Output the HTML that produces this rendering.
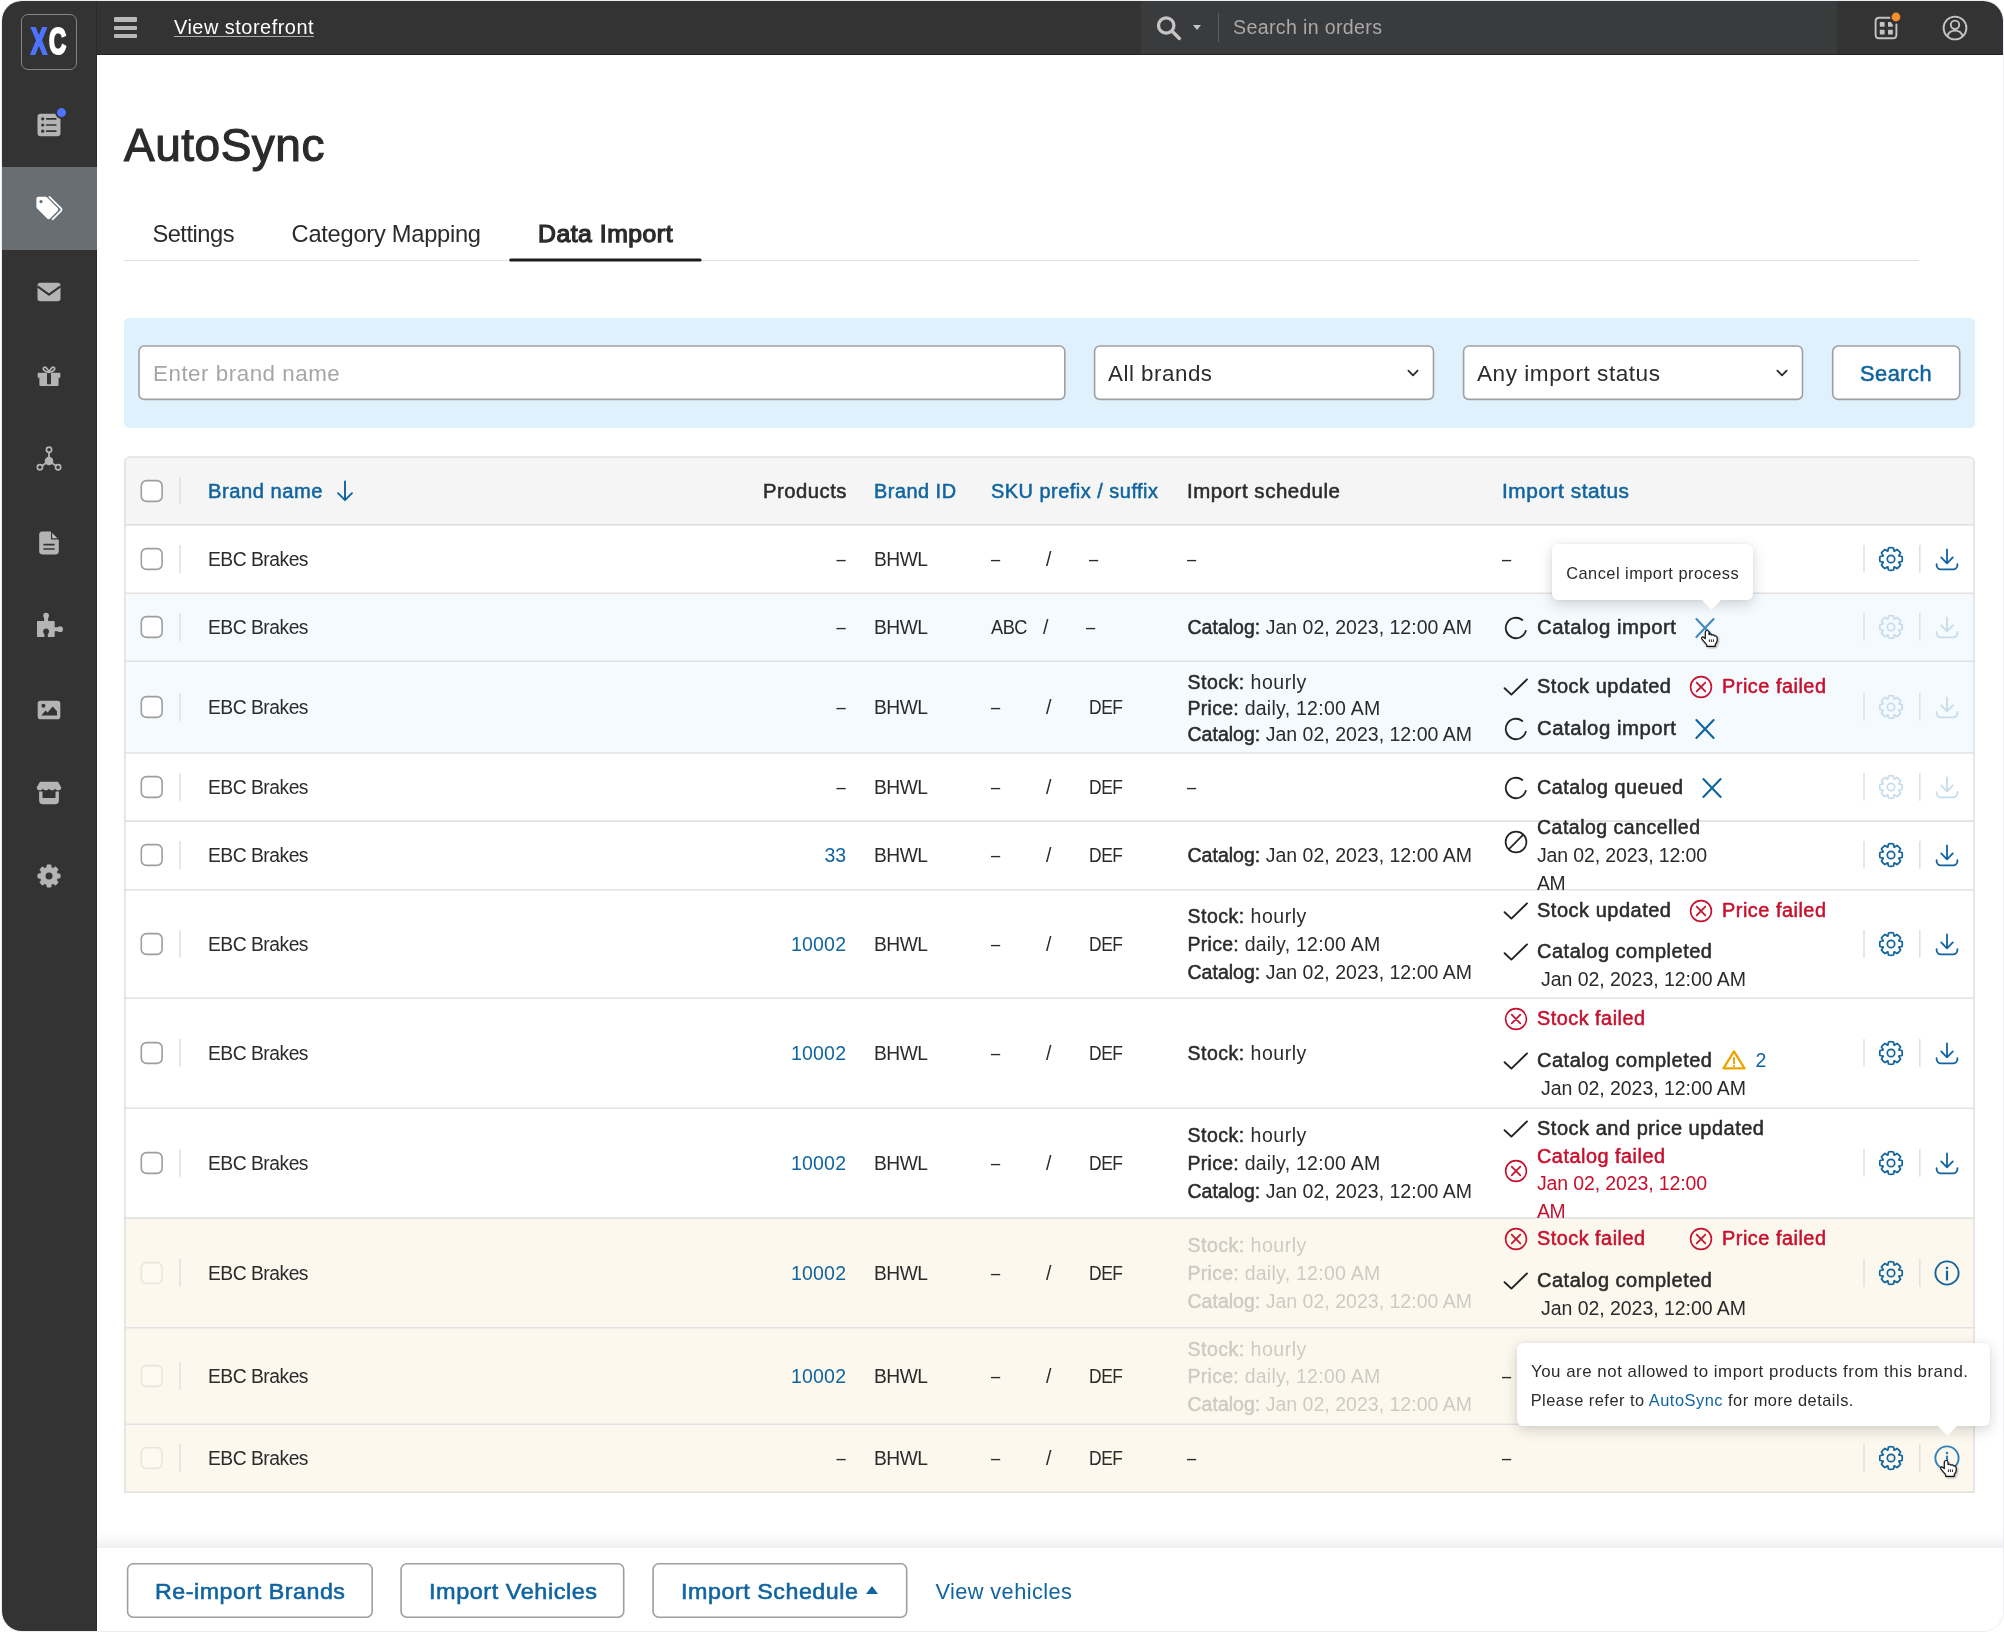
<!DOCTYPE html>
<html lang="en"><head><meta charset="utf-8"><title>AutoSync</title>
<style>
*{box-sizing:border-box;margin:0;padding:0}
html,body{width:2004px;height:1632px;background:#fff;overflow:hidden}
body{font-family:"Liberation Sans",sans-serif;color:#2b2b2b;position:relative;font-size:19.5px}
.abs{position:absolute}
#frame{position:absolute;left:2px;top:1px;width:2001px;height:1630px;border-radius:20px;overflow:hidden;background:#fff;box-shadow:0 0 0 1px #eceef2}
#pg{position:absolute;left:-2px;top:-1px;width:2004px;height:1632px;will-change:transform}
#side{position:absolute;left:0;top:0;width:97px;height:1632px;background:#333;border-right:1px solid #2a2a2a}
#top{position:absolute;left:97px;top:0;width:1907px;height:55px;background:#333;border-bottom:1px solid #242424}
#srch{position:absolute;left:1141px;top:0;width:696px;height:54px;background:#3a3b3d}
.t{position:absolute;white-space:nowrap;line-height:1}
.sb,.t b{font-weight:normal;-webkit-text-stroke:.026em currentColor}
.lnk{color:#10649f}
.red{color:#c5112e}
.ico{position:absolute;overflow:visible}
.vs{position:absolute;width:1.5px;background:#dcdcdc}
.tip{position:absolute;background:#fff;border-radius:6px;box-shadow:0 4px 14px rgba(0,0,0,.17),0 0 3px rgba(0,0,0,.06)}
.tip:after{content:"";position:absolute;bottom:-6.5px;width:13px;height:13px;background:#fff;transform:rotate(45deg);left:var(--ax)}
.fade{opacity:.22}
</style></head>
<body><div id="frame"><div id="pg">
<div id="side"></div><div id="top"></div><div id="srch"></div>
<div class="abs" style="left:2px;top:167px;width:95px;height:83px;background:#696e72"></div>
<div class="abs" style="left:124px;top:317.5px;width:1851px;height:110.5px;background:#dff1fd;border-radius:5px"></div>
<div class="abs" style="left:125px;top:457px;width:1849px;height:68px;background:#f5f5f5;border-radius:5px 5px 0 0"></div>
<div class="abs" style="left:125px;top:593px;width:1849px;height:68px;background:#f4fafe"></div>
<div class="abs" style="left:125px;top:661px;width:1849px;height:92px;background:#f4fafe"></div>
<div class="abs" style="left:125px;top:1218px;width:1849px;height:110px;background:#fcf8ee"></div>
<div class="abs" style="left:125px;top:1328px;width:1849px;height:96px;background:#fcf8ee"></div>
<div class="abs" style="left:125px;top:1424px;width:1849px;height:68px;background:#fcf8ee"></div>
<svg class="abs" style="left:0;top:0" width="2004" height="1632" viewBox="0 0 2004 1632" fill="none"><path d="M124 260.5L1919 260.5" stroke="#dcdcdc" stroke-width="0.9" stroke-linecap="butt"/><path d="M510.7 260L700.1 260" stroke="#1c1c1c" stroke-width="3" stroke-linecap="round"/><rect x="139" y="346" width="925.8" height="53.4" rx="5.2" fill="#fff" stroke="#a0a0a0" stroke-width="1.6"/><rect x="1094.6" y="346" width="338.9" height="53.4" rx="5.2" fill="#fff" stroke="#a0a0a0" stroke-width="1.6"/><rect x="1463.6" y="346" width="338.9" height="53.4" rx="5.2" fill="#fff" stroke="#a0a0a0" stroke-width="1.6"/><rect x="1832.7" y="346" width="127" height="53.4" rx="5.7" fill="#fff" stroke="#9e9e9e" stroke-width="1.6"/><rect x="141.3" y="480.6" width="20.8" height="20.8" rx="5.2" fill="#fff" stroke="#9e9e9e" stroke-width="1.6"/><path d="M180 477L180 504.8" stroke="#e1e1e1" stroke-width="1.6" stroke-linecap="butt"/><path d="M124.1 524.9L1974.8 524.9" stroke="#e2e2e2" stroke-width="1.6" stroke-linecap="butt"/><path d="M124.1 593.2L1974.8 593.2" stroke="#e2e2e2" stroke-width="1.6" stroke-linecap="butt"/><path d="M124.1 661.3L1974.8 661.3" stroke="#e2e2e2" stroke-width="1.6" stroke-linecap="butt"/><path d="M124.1 753L1974.8 753" stroke="#e2e2e2" stroke-width="1.6" stroke-linecap="butt"/><path d="M124.1 821.1L1974.8 821.1" stroke="#e2e2e2" stroke-width="1.6" stroke-linecap="butt"/><path d="M124.1 889.7L1974.8 889.7" stroke="#e2e2e2" stroke-width="1.6" stroke-linecap="butt"/><path d="M124.1 998.3L1974.8 998.3" stroke="#e2e2e2" stroke-width="1.6" stroke-linecap="butt"/><path d="M124.1 1108.3L1974.8 1108.3" stroke="#e2e2e2" stroke-width="1.6" stroke-linecap="butt"/><path d="M124.1 1218.1L1974.8 1218.1" stroke="#e2e2e2" stroke-width="1.6" stroke-linecap="butt"/><path d="M124.1 1327.8L1974.8 1327.8" stroke="#e2e2e2" stroke-width="1.6" stroke-linecap="butt"/><path d="M124.1 1424.2L1974.8 1424.2" stroke="#e2e2e2" stroke-width="1.6" stroke-linecap="butt"/><path d="M124.9 1492.1V462A5 5 0 0 1 129.9 457.05H1969A5 5 0 0 1 1974 462V1492.1Z" fill="none" stroke="#e2e2e2" stroke-width="1.6"/><rect x="141.3" y="548.6" width="20.8" height="20.8" rx="5.2" fill="#fff" stroke="#9e9e9e" stroke-width="1.6"/><path d="M180 545L180 572.8" stroke="#e1e1e1" stroke-width="1.6" stroke-linecap="butt"/><path d="M1864 545L1864 572.8" stroke="#e1e1e1" stroke-width="1.6" stroke-linecap="butt"/><path d="M1919.8 545L1919.8 572.8" stroke="#e1e1e1" stroke-width="1.6" stroke-linecap="butt"/><rect x="141.3" y="616.6" width="20.8" height="20.8" rx="5.2" fill="#fff" stroke="#9e9e9e" stroke-width="1.6"/><path d="M180 613L180 640.8" stroke="#e1e1e1" stroke-width="1.6" stroke-linecap="butt"/><path d="M1864 613L1864 640.8" stroke="#e1e1e1" stroke-width="1.6" stroke-linecap="butt"/><path d="M1919.8 613L1919.8 640.8" stroke="#e1e1e1" stroke-width="1.6" stroke-linecap="butt"/><rect x="141.3" y="696.6" width="20.8" height="20.8" rx="5.2" fill="#fff" stroke="#9e9e9e" stroke-width="1.6"/><path d="M180 693L180 720.8" stroke="#e1e1e1" stroke-width="1.6" stroke-linecap="butt"/><path d="M1864 693L1864 720.8" stroke="#e1e1e1" stroke-width="1.6" stroke-linecap="butt"/><path d="M1919.8 693L1919.8 720.8" stroke="#e1e1e1" stroke-width="1.6" stroke-linecap="butt"/><rect x="141.3" y="776.6" width="20.8" height="20.8" rx="5.2" fill="#fff" stroke="#9e9e9e" stroke-width="1.6"/><path d="M180 773L180 800.8" stroke="#e1e1e1" stroke-width="1.6" stroke-linecap="butt"/><path d="M1864 773L1864 800.8" stroke="#e1e1e1" stroke-width="1.6" stroke-linecap="butt"/><path d="M1919.8 773L1919.8 800.8" stroke="#e1e1e1" stroke-width="1.6" stroke-linecap="butt"/><rect x="141.3" y="844.6" width="20.8" height="20.8" rx="5.2" fill="#fff" stroke="#9e9e9e" stroke-width="1.6"/><path d="M180 841L180 868.8" stroke="#e1e1e1" stroke-width="1.6" stroke-linecap="butt"/><path d="M1864 841L1864 868.8" stroke="#e1e1e1" stroke-width="1.6" stroke-linecap="butt"/><path d="M1919.8 841L1919.8 868.8" stroke="#e1e1e1" stroke-width="1.6" stroke-linecap="butt"/><rect x="141.3" y="933.6" width="20.8" height="20.8" rx="5.2" fill="#fff" stroke="#9e9e9e" stroke-width="1.6"/><path d="M180 930L180 957.8" stroke="#e1e1e1" stroke-width="1.6" stroke-linecap="butt"/><path d="M1864 930L1864 957.8" stroke="#e1e1e1" stroke-width="1.6" stroke-linecap="butt"/><path d="M1919.8 930L1919.8 957.8" stroke="#e1e1e1" stroke-width="1.6" stroke-linecap="butt"/><rect x="141.3" y="1042.6" width="20.8" height="20.8" rx="5.2" fill="#fff" stroke="#9e9e9e" stroke-width="1.6"/><path d="M180 1039L180 1066.8" stroke="#e1e1e1" stroke-width="1.6" stroke-linecap="butt"/><path d="M1864 1039L1864 1066.8" stroke="#e1e1e1" stroke-width="1.6" stroke-linecap="butt"/><path d="M1919.8 1039L1919.8 1066.8" stroke="#e1e1e1" stroke-width="1.6" stroke-linecap="butt"/><rect x="141.3" y="1152.6" width="20.8" height="20.8" rx="5.2" fill="#fff" stroke="#9e9e9e" stroke-width="1.6"/><path d="M180 1149L180 1176.8" stroke="#e1e1e1" stroke-width="1.6" stroke-linecap="butt"/><path d="M1864 1149L1864 1176.8" stroke="#e1e1e1" stroke-width="1.6" stroke-linecap="butt"/><path d="M1919.8 1149L1919.8 1176.8" stroke="#e1e1e1" stroke-width="1.6" stroke-linecap="butt"/><rect x="141.3" y="1262.6" width="20.8" height="20.8" rx="5.2" fill="#fdf9f1" stroke="#ebe6dd" stroke-width="1.6"/><path d="M180 1259L180 1286.8" stroke="#e1e1e1" stroke-width="1.6" stroke-linecap="butt"/><path d="M1864 1259L1864 1286.8" stroke="#e1e1e1" stroke-width="1.6" stroke-linecap="butt"/><path d="M1919.8 1259L1919.8 1286.8" stroke="#e1e1e1" stroke-width="1.6" stroke-linecap="butt"/><rect x="141.3" y="1365.6" width="20.8" height="20.8" rx="5.2" fill="#fdf9f1" stroke="#ebe6dd" stroke-width="1.6"/><path d="M180 1362L180 1389.8" stroke="#e1e1e1" stroke-width="1.6" stroke-linecap="butt"/><rect x="141.3" y="1447.6" width="20.8" height="20.8" rx="5.2" fill="#fdf9f1" stroke="#ebe6dd" stroke-width="1.6"/><path d="M180 1444L180 1471.8" stroke="#e1e1e1" stroke-width="1.6" stroke-linecap="butt"/><path d="M1864 1444L1864 1471.8" stroke="#e1e1e1" stroke-width="1.6" stroke-linecap="butt"/><path d="M1919.8 1444L1919.8 1471.8" stroke="#e1e1e1" stroke-width="1.6" stroke-linecap="butt"/></svg>
<div class="abs" style="left:21px;top:13.6px;width:56px;height:56.4px;border:1.7px solid #858585;border-radius:7px"></div>
<div class="t" style="left:31px;top:24px;font-size:36.5px;font-weight:bold;-webkit-text-stroke:2.2px currentColor;transform:scaleX(.65);transform-origin:0 0;color:#fff"><span style="color:#4d73ff">X</span><span style="margin-left:3.5px">C</span></div>
<svg class="ico" style="left:26.5px;top:103px" width="44" height="44" viewBox="-22 -22 44 44" ><rect x="-11.5" y="-11.3" width="23" height="22.6" rx="3.2" fill="#b4b4b4"/><circle cx="-6.3" cy="-6.2" r="1.6" fill="#333"/><path d="M-2.3 -6.2H6.8" stroke="#333" stroke-width="1.7" stroke-linecap="round"/><circle cx="-6.3" cy="0" r="1.6" fill="#333"/><path d="M-2.3 0H6.8" stroke="#333" stroke-width="1.7" stroke-linecap="round"/><circle cx="-6.3" cy="6.2" r="1.6" fill="#333"/><path d="M-2.3 6.2H6.8" stroke="#333" stroke-width="1.7" stroke-linecap="round"/><circle cx="12.5" cy="-12.4" r="6.3" fill="#333"/><circle cx="12.5" cy="-12.4" r="4.5" fill="#4d73ff"/></svg>
<svg class="ico" style="left:26.5px;top:187px" width="44" height="44" viewBox="-22 -22 44 44" ><path d="M-12.6 -10.2C-12.6 -11.4 -11.7 -12.2 -10.6 -12.2H-3.6C-2.9 -12.2 -2.3 -11.9 -1.8 -11.4L8.6 -1C9.5 -0.1 9.5 1.2 8.6 2.1L1.2 9.5C0.3 10.4 -1 10.4 -1.9 9.5L-11.9 -0.5C-12.4 -1 -12.6 -1.6 -12.6 -2.3Z" fill="#fff"/><circle cx="-8" cy="-7.4" r="1.6" fill="#696e72"/><path d="M0.4 -12.2L11.8 -0.8C12.6 0 12.6 1.3 11.8 2.1L3.6 10.3" fill="none" stroke="#fff" stroke-width="1.7" stroke-linecap="round"/></svg>
<svg class="ico" style="left:26.5px;top:270px" width="44" height="44" viewBox="-22 -22 44 44" ><rect x="-11.5" y="-9.3" width="23" height="18.6" rx="2.8" fill="#b4b4b4"/><path d="M-11.5 -5.6L0 2.6L11.5 -5.6" fill="none" stroke="#333" stroke-width="2.1" stroke-linejoin="round"/></svg>
<svg class="ico" style="left:26.7px;top:353.5px" width="44" height="44" viewBox="-22 -22 44 44" ><rect x="-11.3" y="-3.2" width="22.6" height="5" fill="#b4b4b4"/><rect x="-9.6" y="1.2" width="19.2" height="8.8" rx="1.2" fill="#b4b4b4"/><rect x="-2" y="-3.2" width="4" height="11.4" fill="#333"/><rect x="-0.9" y="-2.2" width="1.8" height="10.4" fill="#333"/><path d="M0 -3.6C-1 -7 -3.4 -9.4 -5 -8.6C-6.8 -7.6 -5.6 -4.6 0 -3.6ZM0 -3.6C1 -7 3.4 -9.4 5 -8.6C6.8 -7.6 5.6 -4.6 0 -3.6Z" fill="none" stroke="#b4b4b4" stroke-width="1.7" stroke-linejoin="round"/></svg>
<svg class="ico" style="left:26.6px;top:439.4px" width="44" height="44" viewBox="-22 -22 44 44" ><path d="M0 0V-11M0 0L-9.1 6.3M0 0L9.1 6.3" stroke="#b4b4b4" stroke-width="1.8"/><circle r="4.3" fill="#b4b4b4"/><circle cy="-11.2" r="2.6" fill="#333" stroke="#b4b4b4" stroke-width="1.7"/><circle cx="-9.1" cy="6.3" r="2.6" fill="#333" stroke="#b4b4b4" stroke-width="1.7"/><circle cx="9.1" cy="6.3" r="2.6" fill="#333" stroke="#b4b4b4" stroke-width="1.7"/></svg>
<svg class="ico" style="left:27px;top:520.5px" width="44" height="44" viewBox="-22 -22 44 44" ><path d="M-9.8 -8.6C-9.8 -10.2 -8.6 -11.4 -7 -11.4H2.6L9.8 -4.2V8.6C9.8 10.2 8.6 11.4 7 11.4H-7C-8.6 11.4 -9.8 10.2 -9.8 8.6Z" fill="#b4b4b4"/><path d="M2.6 -11.4V-4.2H9.8Z" fill="#c6c6c6" stroke="#333" stroke-width="1.2"/><path d="M-5.6 1.6H5.6M-5.6 6H5.6" stroke="#333" stroke-width="1.7"/></svg>
<svg class="ico" style="left:28px;top:603.4px" width="44" height="44" viewBox="-22 -22 44 44" ><rect x="-13" y="-4.1" width="17.7" height="16.1" rx="0.8" fill="#b4b4b4"/><circle cx="-3.9" cy="-9.4" r="2.9" fill="#b4b4b4"/><rect x="-5.9" y="-8" width="4" height="5" fill="#b4b4b4"/><circle cx="10.1" cy="4.2" r="2.9" fill="#b4b4b4"/><rect x="4" y="2.2" width="5" height="4" fill="#b4b4b4"/><circle cx="-3.9" cy="6.5" r="2.9" fill="#333"/><rect x="-5.6" y="7.5" width="3.4" height="5" fill="#333"/></svg>
<svg class="ico" style="left:26.7px;top:688px" width="44" height="44" viewBox="-22 -22 44 44" ><rect x="-11.3" y="-9.2" width="22.6" height="18.4" rx="2.8" fill="#b4b4b4"/><circle cx="-5.6" cy="-4.2" r="2" fill="#333"/><path d="M-7.8 5.6L-3.4 0.4L-1.4 2.4L3.8 -3.6L8 1.2V5.6Z" fill="#333"/></svg>
<svg class="ico" style="left:27px;top:771px" width="44" height="44" viewBox="-22 -22 44 44" ><path d="M-9 -11.3H9L12.3 -5.6C12.3 -3.4 10.6 -2.8 9.2 -2.8C7.6 -2.8 6.4 -3.6 6.1 -4.6C5.8 -3.6 4.6 -2.8 3.1 -2.8C1.6 -2.8 0.3 -3.6 0 -4.6C-0.3 -3.6 -1.6 -2.8 -3.1 -2.8C-4.6 -2.8 -5.8 -3.6 -6.1 -4.6C-6.4 -3.6 -7.6 -2.8 -9.2 -2.8C-10.6 -2.8 -12.3 -3.4 -12.3 -5.6Z" fill="#b4b4b4"/><path d="M-8.2 -1.6V7.2C-8.2 8.6 -7.4 9.6 -6 9.6H6C7.4 9.6 8.2 8.6 8.2 7.2V-1.6" fill="none" stroke="#b4b4b4" stroke-width="3.4"/><rect x="-8" y="5" width="16" height="5.6" fill="#b4b4b4"/></svg>
<svg class="ico" style="left:26.7px;top:854.4px" width="44" height="44" viewBox="-22 -22 44 44" ><path d="M-2.60 -8.30L-1.90 -11.14A11.30 11.30 0 0 1 1.90 -11.14L2.60 -8.30A8.70 8.70 0 0 1 4.03 -7.71L6.53 -9.22A11.30 11.30 0 0 1 9.22 -6.53L7.71 -4.03A8.70 8.70 0 0 1 8.30 -2.60L11.14 -1.90A11.30 11.30 0 0 1 11.14 1.90L8.30 2.60A8.70 8.70 0 0 1 7.71 4.03L9.22 6.53A11.30 11.30 0 0 1 6.53 9.22L4.03 7.71A8.70 8.70 0 0 1 2.60 8.30L1.90 11.14A11.30 11.30 0 0 1 -1.90 11.14L-2.60 8.30A8.70 8.70 0 0 1 -4.03 7.71L-6.53 9.22A11.30 11.30 0 0 1 -9.22 6.53L-7.71 4.03A8.70 8.70 0 0 1 -8.30 2.60L-11.14 1.90A11.30 11.30 0 0 1 -11.14 -1.90L-8.30 -2.60A8.70 8.70 0 0 1 -7.71 -4.03L-9.22 -6.53A11.30 11.30 0 0 1 -6.53 -9.22L-4.03 -7.71A8.70 8.70 0 0 1 -2.60 -8.30Z" fill="#b4b4b4" stroke="#b4b4b4" stroke-width="0.5" stroke-linejoin="round"/><circle r="3.5" fill="#333"/></svg>
<div class="abs" style="left:114px;top:17.4px;width:23px;height:4.2px;border-radius:1px;background:#b9b9b9"></div>
<div class="abs" style="left:114px;top:25.5px;width:23px;height:4.2px;border-radius:1px;background:#b9b9b9"></div>
<div class="abs" style="left:114px;top:33.6px;width:23px;height:4.2px;border-radius:1px;background:#b9b9b9"></div>
<svg class="ico" style="left:1154px;top:12.5px" width="32" height="32" viewBox="-16 -16 32 32" ><circle cx="-3.8" cy="-3.5" r="7.7" fill="none" stroke="#c4c4c4" stroke-width="3.3"/><path d="M2.4 2.6L9.4 9.4" stroke="#c4c4c4" stroke-width="3.5" stroke-linecap="round"/></svg>
<div class="abs" style="left:1192.5px;top:24.8px;width:0;height:0;border-left:4.4px solid transparent;border-right:4.4px solid transparent;border-top:5.6px solid #c4c4c4"></div>
<svg class="ico" style="left:1867.5px;top:9.5px" width="36" height="36" viewBox="-18 -18 36 36" ><path d="M6 -10.3H-6.8C-9 -10.3 -10.4 -8.9 -10.4 -6.7V6.7C-10.4 8.9 -9 10.3 -6.8 10.3H6.8C9 10.3 10.4 8.9 10.4 6.7V-3.6" fill="none" stroke="#c4c4c4" stroke-width="1.9" stroke-linecap="round"/><rect x="-6.2" y="-6" width="4.8" height="4.8" rx=".6" fill="#c4c4c4"/><path d="M2 -6H4.6L6.8 -3.6V-1.2H2Z" fill="#c4c4c4"/><rect x="-6.2" y="1.8" width="4.8" height="4.8" rx=".6" fill="#c4c4c4"/><rect x="2" y="1.8" width="4.8" height="4.8" rx=".6" fill="#c4c4c4"/><circle cx="10" cy="-11" r="6" fill="#323232"/><circle cx="10" cy="-11" r="4.4" fill="#f5902b"/></svg>
<svg class="ico" style="left:1940px;top:12.5px" width="30" height="30" viewBox="-15 -15 30 30" ><circle r="11.4" fill="none" stroke="#c4c4c4" stroke-width="1.9"/><circle cy="-3.2" r="4.2" fill="none" stroke="#c4c4c4" stroke-width="1.9"/><path d="M-7.6 8.2C-6.6 4.4 -3.6 2.6 0 2.6C3.6 2.6 6.6 4.4 7.6 8.2" fill="none" stroke="#c4c4c4" stroke-width="1.9"/></svg>
<div class="t " style="left:174px;top:18px;font-size:19.6px;letter-spacing:0.500px;transform:scaleX(1.0158);transform-origin:0 0;color:#fff;text-decoration:underline;text-underline-offset:1.5px;text-decoration-thickness:1px;text-decoration-color:#aaa">View storefront</div>
<div class="t " style="left:1233px;top:18px;font-size:19.6px;letter-spacing:0.349px;color:#a9a9a9">Search in orders</div>
<div class="vs" style="left:1217.5px;top:13px;height:29px;background:#5e5e5e"></div>
<div class="t " style="left:124px;top:123px;font-size:45.4px;letter-spacing:0.500px;transform:scaleX(1.0132);transform-origin:0 0;-webkit-text-stroke:1.1px #2b2b2b">AutoSync</div>
<div class="t " style="left:152.4px;top:223px;font-size:23.7px;letter-spacing:-0.499px;">Settings</div>
<div class="t " style="left:291.6px;top:223px;font-size:23.7px;letter-spacing:-0.277px;">Category Mapping</div>
<div class="t sb" style="left:538.3px;top:223px;font-size:23.7px;letter-spacing:0.500px;transform:scaleX(1.0447);transform-origin:0 0;-webkit-text-stroke:1.25px currentColor">Data Import</div>
<div class="t " style="left:152.8px;top:363px;font-size:21.8px;letter-spacing:0.500px;transform:scaleX(1.0265);transform-origin:0 0;color:#a6a6a6">Enter brand name</div>
<div class="t " style="left:1108px;top:363px;font-size:21.8px;letter-spacing:0.500px;transform:scaleX(1.0253);transform-origin:0 0;">All brands</div>
<svg class="ico" style="left:1406px;top:368px" width="14" height="10" viewBox="-7 -5 14 10" ><path d="M-4.6 -2.4L0 2.4L4.6 -2.4" fill="none" stroke="#2b2b2b" stroke-width="1.8" stroke-linecap="round" stroke-linejoin="round"/></svg>
<div class="t " style="left:1477px;top:363px;font-size:21.8px;letter-spacing:0.500px;transform:scaleX(1.0375);transform-origin:0 0;">Any import status</div>
<svg class="ico" style="left:1775px;top:368px" width="14" height="10" viewBox="-7 -5 14 10" ><path d="M-4.6 -2.4L0 2.4L4.6 -2.4" fill="none" stroke="#2b2b2b" stroke-width="1.8" stroke-linecap="round" stroke-linejoin="round"/></svg>
<div class="t sb lnk" style="left:1860px;top:363px;font-size:21.8px;letter-spacing:0.500px;">Search</div>
<div class="t sb lnk" style="left:208px;top:482px;font-size:19.5px;letter-spacing:0.500px;transform:scaleX(1.0340);transform-origin:0 0;">Brand name</div>
<svg class="ico" style="left:335px;top:479px" width="20" height="24" viewBox="-10 -12 20 24" ><path d="M0 -9.5V9M-7 2.2L0 9.2L7 2.2" fill="none" stroke="#10649f" stroke-width="1.9" stroke-linecap="round" stroke-linejoin="round"/></svg>
<div class="t sb" style="right:1157.5px;top:482px;font-size:19.5px;letter-spacing:0.500px;transform:scaleX(1.0379);transform-origin:100% 0;">Products</div>
<div class="t sb lnk" style="left:874px;top:482px;font-size:19.5px;letter-spacing:0.500px;transform:scaleX(1.0192);transform-origin:0 0;">Brand ID</div>
<div class="t sb lnk" style="left:991px;top:482px;font-size:19.5px;letter-spacing:0.500px;transform:scaleX(1.0206);transform-origin:0 0;">SKU prefix / suffix</div>
<div class="t sb" style="left:1187px;top:482px;font-size:19.5px;letter-spacing:0.500px;transform:scaleX(1.0497);transform-origin:0 0;">Import schedule</div>
<div class="t sb lnk" style="left:1502px;top:482px;font-size:19.5px;letter-spacing:0.500px;transform:scaleX(1.0698);transform-origin:0 0;">Import status</div>
<div class="t " style="left:207.6px;top:550px;font-size:19.5px;letter-spacing:-0.500px;transform:scaleX(0.9882);transform-origin:0 0;">EBC Brakes</div>
<div class="t " style="right:1158.5px;top:550px;font-size:19.5px;letter-spacing:-0.500px;transform:scaleX(0.8472);transform-origin:100% 0;">–</div>
<div class="t " style="left:873.6px;top:550px;font-size:19.5px;letter-spacing:-0.500px;transform:scaleX(0.9846);transform-origin:0 0;">BHWL</div>
<div class="t " style="left:991px;top:550px;font-size:19.5px;letter-spacing:-0.500px;transform:scaleX(0.8472);transform-origin:0 0;">–</div>
<div class="t " style="left:1046px;top:550px;font-size:19.5px;">/</div>
<div class="t " style="left:1089px;top:550px;font-size:19.5px;letter-spacing:-0.500px;transform:scaleX(0.8472);transform-origin:0 0;">–</div>
<div class="t " style="left:1187px;top:550px;font-size:19.5px;letter-spacing:-0.500px;transform:scaleX(0.8472);transform-origin:0 0;">–</div>
<div class="t " style="left:1502px;top:550px;font-size:19.5px;letter-spacing:-0.500px;transform:scaleX(0.8472);transform-origin:0 0;">–</div>
<svg class="ico" style="left:1877.2px;top:545px" width="28" height="28" viewBox="-14 -14 28 28" ><path d="M-3.20 -7.77L-2.50 -11.02A11.30 11.30 0 0 1 2.50 -11.02L3.20 -7.77A8.40 8.40 0 0 1 3.23 -7.75L6.02 -9.56A11.30 11.30 0 0 1 9.56 -6.02L7.75 -3.23A8.40 8.40 0 0 1 7.77 -3.20L11.02 -2.50A11.30 11.30 0 0 1 11.02 2.50L7.77 3.20A8.40 8.40 0 0 1 7.75 3.23L9.56 6.02A11.30 11.30 0 0 1 6.02 9.56L3.23 7.75A8.40 8.40 0 0 1 3.20 7.77L2.50 11.02A11.30 11.30 0 0 1 -2.50 11.02L-3.20 7.77A8.40 8.40 0 0 1 -3.23 7.75L-6.02 9.56A11.30 11.30 0 0 1 -9.56 6.02L-7.75 3.23A8.40 8.40 0 0 1 -7.77 3.20L-11.02 2.50A11.30 11.30 0 0 1 -11.02 -2.50L-7.77 -3.20A8.40 8.40 0 0 1 -7.75 -3.23L-9.56 -6.02A11.30 11.30 0 0 1 -6.02 -9.56L-3.23 -7.75A8.40 8.40 0 0 1 -3.20 -7.77Z" fill="none" stroke="#10649f" stroke-width="1.7" stroke-linejoin="round"/><circle r="3.7" fill="none" stroke="#10649f" stroke-width="1.7"/></svg>
<svg class="ico" style="left:1933px;top:545px" width="28" height="28" viewBox="-14 -14 28 28" ><path d="M0 -9.6V4.2M-5.8 -1.6L0 4.4L5.8 -1.6" fill="none" stroke="#10649f" stroke-width="1.8" stroke-linecap="round" stroke-linejoin="round"/><path d="M-10.4 5.2V6.1A4.3 4.3 0 0 0 -6.1 10.4H6.1A4.3 4.3 0 0 0 10.4 6.1V5.2" fill="none" stroke="#10649f" stroke-width="1.8" stroke-linecap="round"/></svg>
<div class="t " style="left:207.6px;top:618px;font-size:19.5px;letter-spacing:-0.500px;transform:scaleX(0.9882);transform-origin:0 0;">EBC Brakes</div>
<div class="t " style="right:1158.5px;top:618px;font-size:19.5px;letter-spacing:-0.500px;transform:scaleX(0.8472);transform-origin:100% 0;">–</div>
<div class="t " style="left:873.6px;top:618px;font-size:19.5px;letter-spacing:-0.500px;transform:scaleX(0.9846);transform-origin:0 0;">BHWL</div>
<div class="t " style="left:991px;top:618px;font-size:19.5px;letter-spacing:-0.500px;transform:scaleX(0.9333);transform-origin:0 0;">ABC</div>
<div class="t " style="left:1043px;top:618px;font-size:19.5px;">/</div>
<div class="t " style="left:1086px;top:618px;font-size:19.5px;letter-spacing:-0.500px;transform:scaleX(0.8472);transform-origin:0 0;">–</div>
<div class="t " style="left:1187.5px;top:618px;font-size:19.5px;letter-spacing:0.015px;"><b>Catalog:</b> Jan 02, 2023, 12:00 AM</div>
<svg class="ico" style="left:1502.5px;top:614.5px" width="26" height="26" viewBox="-13 -13 26 26" ><path d="M6.28 -8.04A10.2 10.2 0 1 0 9.80 2.81" fill="none" stroke="#222" stroke-width="1.8" stroke-linecap="round"/></svg>
<div class="t sb" style="left:1537px;top:618px;font-size:19.5px;letter-spacing:0.500px;transform:scaleX(1.0427);transform-origin:0 0;">Catalog import</div>
<svg class="ico" style="left:1693px;top:615.5px" width="24" height="24" viewBox="-12 -12 24 24" ><path d="M-8.6 -9L8.6 9M8.6 -9L-8.6 9" stroke="#3f88c0" stroke-width="2.1" stroke-linecap="round"/></svg>
<svg class="ico" style="left:1877.2px;top:613px" width="28" height="28" viewBox="-14 -14 28 28" ><path d="M-3.20 -7.77L-2.50 -11.02A11.30 11.30 0 0 1 2.50 -11.02L3.20 -7.77A8.40 8.40 0 0 1 3.23 -7.75L6.02 -9.56A11.30 11.30 0 0 1 9.56 -6.02L7.75 -3.23A8.40 8.40 0 0 1 7.77 -3.20L11.02 -2.50A11.30 11.30 0 0 1 11.02 2.50L7.77 3.20A8.40 8.40 0 0 1 7.75 3.23L9.56 6.02A11.30 11.30 0 0 1 6.02 9.56L3.23 7.75A8.40 8.40 0 0 1 3.20 7.77L2.50 11.02A11.30 11.30 0 0 1 -2.50 11.02L-3.20 7.77A8.40 8.40 0 0 1 -3.23 7.75L-6.02 9.56A11.30 11.30 0 0 1 -9.56 6.02L-7.75 3.23A8.40 8.40 0 0 1 -7.77 3.20L-11.02 2.50A11.30 11.30 0 0 1 -11.02 -2.50L-7.77 -3.20A8.40 8.40 0 0 1 -7.75 -3.23L-9.56 -6.02A11.30 11.30 0 0 1 -6.02 -9.56L-3.23 -7.75A8.40 8.40 0 0 1 -3.20 -7.77Z" fill="none" stroke="#c7dcec" stroke-width="1.7" stroke-linejoin="round"/><circle r="3.7" fill="none" stroke="#c7dcec" stroke-width="1.7"/></svg>
<svg class="ico" style="left:1933px;top:613px" width="28" height="28" viewBox="-14 -14 28 28" ><path d="M0 -9.6V4.2M-5.8 -1.6L0 4.4L5.8 -1.6" fill="none" stroke="#c7dcec" stroke-width="1.8" stroke-linecap="round" stroke-linejoin="round"/><path d="M-10.4 5.2V6.1A4.3 4.3 0 0 0 -6.1 10.4H6.1A4.3 4.3 0 0 0 10.4 6.1V5.2" fill="none" stroke="#c7dcec" stroke-width="1.8" stroke-linecap="round"/></svg>
<div class="t " style="left:207.6px;top:698px;font-size:19.5px;letter-spacing:-0.500px;transform:scaleX(0.9882);transform-origin:0 0;">EBC Brakes</div>
<div class="t " style="right:1158.5px;top:698px;font-size:19.5px;letter-spacing:-0.500px;transform:scaleX(0.8472);transform-origin:100% 0;">–</div>
<div class="t " style="left:873.6px;top:698px;font-size:19.5px;letter-spacing:-0.500px;transform:scaleX(0.9846);transform-origin:0 0;">BHWL</div>
<div class="t " style="left:991px;top:698px;font-size:19.5px;letter-spacing:-0.500px;transform:scaleX(0.8472);transform-origin:0 0;">–</div>
<div class="t " style="left:1046px;top:698px;font-size:19.5px;">/</div>
<div class="t " style="left:1089px;top:698px;font-size:19.5px;letter-spacing:-0.500px;transform:scaleX(0.8947);transform-origin:0 0;">DEF</div>
<div class="t " style="left:1187.5px;top:673px;font-size:19.5px;letter-spacing:0.500px;"><b>Stock:</b> hourly</div>
<div class="t " style="left:1187.5px;top:699px;font-size:19.5px;letter-spacing:0.268px;"><b>Price:</b> daily, 12:00 AM</div>
<div class="t " style="left:1187.5px;top:725px;font-size:19.5px;letter-spacing:0.015px;"><b>Catalog:</b> Jan 02, 2023, 12:00 AM</div>
<svg class="ico" style="left:1501px;top:674px" width="28" height="24" viewBox="-14 -12 28 24" ><path d="M-10.4 2.2L-3.6 8.6L12 -6.6" fill="none" stroke="#222" stroke-width="1.9" stroke-linecap="round" stroke-linejoin="round"/></svg>
<div class="t sb" style="left:1537px;top:677px;font-size:19.5px;letter-spacing:0.500px;transform:scaleX(1.0253);transform-origin:0 0;">Stock updated</div>
<svg class="ico" style="left:1687.5px;top:673.5px" width="26" height="26" viewBox="-13 -13 26 26" ><circle r="10.4" fill="none" stroke="#c5112e" stroke-width="1.6"/><path d="M-4.3 -4.3L4.3 4.3M4.3 -4.3L-4.3 4.3" stroke="#c5112e" stroke-width="1.7" stroke-linecap="round"/></svg>
<div class="t sb red" style="left:1722px;top:677px;font-size:19.5px;letter-spacing:0.500px;transform:scaleX(1.0199);transform-origin:0 0;">Price failed</div>
<svg class="ico" style="left:1502.5px;top:715.5px" width="26" height="26" viewBox="-13 -13 26 26" ><path d="M6.28 -8.04A10.2 10.2 0 1 0 9.80 2.81" fill="none" stroke="#222" stroke-width="1.8" stroke-linecap="round"/></svg>
<div class="t sb" style="left:1537px;top:719px;font-size:19.5px;letter-spacing:0.500px;transform:scaleX(1.0427);transform-origin:0 0;">Catalog import</div>
<svg class="ico" style="left:1693px;top:716.5px" width="24" height="24" viewBox="-12 -12 24 24" ><path d="M-8.6 -9L8.6 9M8.6 -9L-8.6 9" stroke="#10649f" stroke-width="2.1" stroke-linecap="round"/></svg>
<svg class="ico" style="left:1877.2px;top:693px" width="28" height="28" viewBox="-14 -14 28 28" ><path d="M-3.20 -7.77L-2.50 -11.02A11.30 11.30 0 0 1 2.50 -11.02L3.20 -7.77A8.40 8.40 0 0 1 3.23 -7.75L6.02 -9.56A11.30 11.30 0 0 1 9.56 -6.02L7.75 -3.23A8.40 8.40 0 0 1 7.77 -3.20L11.02 -2.50A11.30 11.30 0 0 1 11.02 2.50L7.77 3.20A8.40 8.40 0 0 1 7.75 3.23L9.56 6.02A11.30 11.30 0 0 1 6.02 9.56L3.23 7.75A8.40 8.40 0 0 1 3.20 7.77L2.50 11.02A11.30 11.30 0 0 1 -2.50 11.02L-3.20 7.77A8.40 8.40 0 0 1 -3.23 7.75L-6.02 9.56A11.30 11.30 0 0 1 -9.56 6.02L-7.75 3.23A8.40 8.40 0 0 1 -7.77 3.20L-11.02 2.50A11.30 11.30 0 0 1 -11.02 -2.50L-7.77 -3.20A8.40 8.40 0 0 1 -7.75 -3.23L-9.56 -6.02A11.30 11.30 0 0 1 -6.02 -9.56L-3.23 -7.75A8.40 8.40 0 0 1 -3.20 -7.77Z" fill="none" stroke="#c7dcec" stroke-width="1.7" stroke-linejoin="round"/><circle r="3.7" fill="none" stroke="#c7dcec" stroke-width="1.7"/></svg>
<svg class="ico" style="left:1933px;top:693px" width="28" height="28" viewBox="-14 -14 28 28" ><path d="M0 -9.6V4.2M-5.8 -1.6L0 4.4L5.8 -1.6" fill="none" stroke="#c7dcec" stroke-width="1.8" stroke-linecap="round" stroke-linejoin="round"/><path d="M-10.4 5.2V6.1A4.3 4.3 0 0 0 -6.1 10.4H6.1A4.3 4.3 0 0 0 10.4 6.1V5.2" fill="none" stroke="#c7dcec" stroke-width="1.8" stroke-linecap="round"/></svg>
<div class="t " style="left:207.6px;top:778px;font-size:19.5px;letter-spacing:-0.500px;transform:scaleX(0.9882);transform-origin:0 0;">EBC Brakes</div>
<div class="t " style="right:1158.5px;top:778px;font-size:19.5px;letter-spacing:-0.500px;transform:scaleX(0.8472);transform-origin:100% 0;">–</div>
<div class="t " style="left:873.6px;top:778px;font-size:19.5px;letter-spacing:-0.500px;transform:scaleX(0.9846);transform-origin:0 0;">BHWL</div>
<div class="t " style="left:991px;top:778px;font-size:19.5px;letter-spacing:-0.500px;transform:scaleX(0.8472);transform-origin:0 0;">–</div>
<div class="t " style="left:1046px;top:778px;font-size:19.5px;">/</div>
<div class="t " style="left:1089px;top:778px;font-size:19.5px;letter-spacing:-0.500px;transform:scaleX(0.8947);transform-origin:0 0;">DEF</div>
<div class="t " style="left:1187px;top:778px;font-size:19.5px;letter-spacing:-0.500px;transform:scaleX(0.8472);transform-origin:0 0;">–</div>
<svg class="ico" style="left:1502.5px;top:774.5px" width="26" height="26" viewBox="-13 -13 26 26" ><path d="M6.28 -8.04A10.2 10.2 0 1 0 9.80 2.81" fill="none" stroke="#222" stroke-width="1.8" stroke-linecap="round"/></svg>
<div class="t sb" style="left:1537px;top:778px;font-size:19.5px;letter-spacing:0.500px;transform:scaleX(1.0125);transform-origin:0 0;">Catalog queued</div>
<svg class="ico" style="left:1700px;top:775.5px" width="24" height="24" viewBox="-12 -12 24 24" ><path d="M-8.6 -9L8.6 9M8.6 -9L-8.6 9" stroke="#10649f" stroke-width="2.1" stroke-linecap="round"/></svg>
<svg class="ico" style="left:1877.2px;top:773px" width="28" height="28" viewBox="-14 -14 28 28" ><path d="M-3.20 -7.77L-2.50 -11.02A11.30 11.30 0 0 1 2.50 -11.02L3.20 -7.77A8.40 8.40 0 0 1 3.23 -7.75L6.02 -9.56A11.30 11.30 0 0 1 9.56 -6.02L7.75 -3.23A8.40 8.40 0 0 1 7.77 -3.20L11.02 -2.50A11.30 11.30 0 0 1 11.02 2.50L7.77 3.20A8.40 8.40 0 0 1 7.75 3.23L9.56 6.02A11.30 11.30 0 0 1 6.02 9.56L3.23 7.75A8.40 8.40 0 0 1 3.20 7.77L2.50 11.02A11.30 11.30 0 0 1 -2.50 11.02L-3.20 7.77A8.40 8.40 0 0 1 -3.23 7.75L-6.02 9.56A11.30 11.30 0 0 1 -9.56 6.02L-7.75 3.23A8.40 8.40 0 0 1 -7.77 3.20L-11.02 2.50A11.30 11.30 0 0 1 -11.02 -2.50L-7.77 -3.20A8.40 8.40 0 0 1 -7.75 -3.23L-9.56 -6.02A11.30 11.30 0 0 1 -6.02 -9.56L-3.23 -7.75A8.40 8.40 0 0 1 -3.20 -7.77Z" fill="none" stroke="#c7dcec" stroke-width="1.7" stroke-linejoin="round"/><circle r="3.7" fill="none" stroke="#c7dcec" stroke-width="1.7"/></svg>
<svg class="ico" style="left:1933px;top:773px" width="28" height="28" viewBox="-14 -14 28 28" ><path d="M0 -9.6V4.2M-5.8 -1.6L0 4.4L5.8 -1.6" fill="none" stroke="#c7dcec" stroke-width="1.8" stroke-linecap="round" stroke-linejoin="round"/><path d="M-10.4 5.2V6.1A4.3 4.3 0 0 0 -6.1 10.4H6.1A4.3 4.3 0 0 0 10.4 6.1V5.2" fill="none" stroke="#c7dcec" stroke-width="1.8" stroke-linecap="round"/></svg>
<div class="t " style="left:207.6px;top:846px;font-size:19.5px;letter-spacing:-0.500px;transform:scaleX(0.9882);transform-origin:0 0;">EBC Brakes</div>
<div class="t lnk" style="right:1158.2px;top:846px;font-size:19.5px;letter-spacing:-0.203px;">33</div>
<div class="t " style="left:873.6px;top:846px;font-size:19.5px;letter-spacing:-0.500px;transform:scaleX(0.9846);transform-origin:0 0;">BHWL</div>
<div class="t " style="left:991px;top:846px;font-size:19.5px;letter-spacing:-0.500px;transform:scaleX(0.8472);transform-origin:0 0;">–</div>
<div class="t " style="left:1046px;top:846px;font-size:19.5px;">/</div>
<div class="t " style="left:1089px;top:846px;font-size:19.5px;letter-spacing:-0.500px;transform:scaleX(0.8947);transform-origin:0 0;">DEF</div>
<div class="t " style="left:1187.5px;top:846px;font-size:19.5px;letter-spacing:0.015px;"><b>Catalog:</b> Jan 02, 2023, 12:00 AM</div>
<svg class="ico" style="left:1502.5px;top:828.5px" width="26" height="26" viewBox="-13 -13 26 26" ><circle r="10.4" fill="none" stroke="#222" stroke-width="1.7"/><path d="M-7.3 7.3L7.3 -7.3" stroke="#222" stroke-width="1.7"/></svg>
<div class="t sb" style="left:1537px;top:818px;font-size:19.5px;letter-spacing:0.498px;">Catalog cancelled</div>
<div class="t " style="left:1537px;top:846px;font-size:19.5px;letter-spacing:-0.134px;">Jan 02, 2023, 12:00</div>
<div class="t " style="left:1537px;top:874px;font-size:19.5px;letter-spacing:-0.500px;transform:scaleX(0.9913);transform-origin:0 0;">AM</div>
<svg class="ico" style="left:1877.2px;top:841px" width="28" height="28" viewBox="-14 -14 28 28" ><path d="M-3.20 -7.77L-2.50 -11.02A11.30 11.30 0 0 1 2.50 -11.02L3.20 -7.77A8.40 8.40 0 0 1 3.23 -7.75L6.02 -9.56A11.30 11.30 0 0 1 9.56 -6.02L7.75 -3.23A8.40 8.40 0 0 1 7.77 -3.20L11.02 -2.50A11.30 11.30 0 0 1 11.02 2.50L7.77 3.20A8.40 8.40 0 0 1 7.75 3.23L9.56 6.02A11.30 11.30 0 0 1 6.02 9.56L3.23 7.75A8.40 8.40 0 0 1 3.20 7.77L2.50 11.02A11.30 11.30 0 0 1 -2.50 11.02L-3.20 7.77A8.40 8.40 0 0 1 -3.23 7.75L-6.02 9.56A11.30 11.30 0 0 1 -9.56 6.02L-7.75 3.23A8.40 8.40 0 0 1 -7.77 3.20L-11.02 2.50A11.30 11.30 0 0 1 -11.02 -2.50L-7.77 -3.20A8.40 8.40 0 0 1 -7.75 -3.23L-9.56 -6.02A11.30 11.30 0 0 1 -6.02 -9.56L-3.23 -7.75A8.40 8.40 0 0 1 -3.20 -7.77Z" fill="none" stroke="#10649f" stroke-width="1.7" stroke-linejoin="round"/><circle r="3.7" fill="none" stroke="#10649f" stroke-width="1.7"/></svg>
<svg class="ico" style="left:1933px;top:841px" width="28" height="28" viewBox="-14 -14 28 28" ><path d="M0 -9.6V4.2M-5.8 -1.6L0 4.4L5.8 -1.6" fill="none" stroke="#10649f" stroke-width="1.8" stroke-linecap="round" stroke-linejoin="round"/><path d="M-10.4 5.2V6.1A4.3 4.3 0 0 0 -6.1 10.4H6.1A4.3 4.3 0 0 0 10.4 6.1V5.2" fill="none" stroke="#10649f" stroke-width="1.8" stroke-linecap="round"/></svg>
<div class="t " style="left:207.6px;top:935px;font-size:19.5px;letter-spacing:-0.500px;transform:scaleX(0.9882);transform-origin:0 0;">EBC Brakes</div>
<div class="t lnk" style="right:1157.81px;top:935px;font-size:19.5px;letter-spacing:0.191px;">10002</div>
<div class="t " style="left:873.6px;top:935px;font-size:19.5px;letter-spacing:-0.500px;transform:scaleX(0.9846);transform-origin:0 0;">BHWL</div>
<div class="t " style="left:991px;top:935px;font-size:19.5px;letter-spacing:-0.500px;transform:scaleX(0.8472);transform-origin:0 0;">–</div>
<div class="t " style="left:1046px;top:935px;font-size:19.5px;">/</div>
<div class="t " style="left:1089px;top:935px;font-size:19.5px;letter-spacing:-0.500px;transform:scaleX(0.8947);transform-origin:0 0;">DEF</div>
<div class="t " style="left:1187.5px;top:907px;font-size:19.5px;letter-spacing:0.500px;"><b>Stock:</b> hourly</div>
<div class="t " style="left:1187.5px;top:935px;font-size:19.5px;letter-spacing:0.268px;"><b>Price:</b> daily, 12:00 AM</div>
<div class="t " style="left:1187.5px;top:963px;font-size:19.5px;letter-spacing:0.015px;"><b>Catalog:</b> Jan 02, 2023, 12:00 AM</div>
<svg class="ico" style="left:1501px;top:898px" width="28" height="24" viewBox="-14 -12 28 24" ><path d="M-10.4 2.2L-3.6 8.6L12 -6.6" fill="none" stroke="#222" stroke-width="1.9" stroke-linecap="round" stroke-linejoin="round"/></svg>
<div class="t sb" style="left:1537px;top:901px;font-size:19.5px;letter-spacing:0.500px;transform:scaleX(1.0253);transform-origin:0 0;">Stock updated</div>
<svg class="ico" style="left:1687.5px;top:897.5px" width="26" height="26" viewBox="-13 -13 26 26" ><circle r="10.4" fill="none" stroke="#c5112e" stroke-width="1.6"/><path d="M-4.3 -4.3L4.3 4.3M4.3 -4.3L-4.3 4.3" stroke="#c5112e" stroke-width="1.7" stroke-linecap="round"/></svg>
<div class="t sb red" style="left:1722px;top:901px;font-size:19.5px;letter-spacing:0.500px;transform:scaleX(1.0199);transform-origin:0 0;">Price failed</div>
<svg class="ico" style="left:1501px;top:939px" width="28" height="24" viewBox="-14 -12 28 24" ><path d="M-10.4 2.2L-3.6 8.6L12 -6.6" fill="none" stroke="#222" stroke-width="1.9" stroke-linecap="round" stroke-linejoin="round"/></svg>
<div class="t sb" style="left:1537px;top:942px;font-size:19.5px;letter-spacing:0.500px;transform:scaleX(1.0257);transform-origin:0 0;">Catalog completed</div>
<div class="t " style="left:1541px;top:970px;font-size:19.5px;letter-spacing:-0.048px;">Jan 02, 2023, 12:00 AM</div>
<svg class="ico" style="left:1877.2px;top:930px" width="28" height="28" viewBox="-14 -14 28 28" ><path d="M-3.20 -7.77L-2.50 -11.02A11.30 11.30 0 0 1 2.50 -11.02L3.20 -7.77A8.40 8.40 0 0 1 3.23 -7.75L6.02 -9.56A11.30 11.30 0 0 1 9.56 -6.02L7.75 -3.23A8.40 8.40 0 0 1 7.77 -3.20L11.02 -2.50A11.30 11.30 0 0 1 11.02 2.50L7.77 3.20A8.40 8.40 0 0 1 7.75 3.23L9.56 6.02A11.30 11.30 0 0 1 6.02 9.56L3.23 7.75A8.40 8.40 0 0 1 3.20 7.77L2.50 11.02A11.30 11.30 0 0 1 -2.50 11.02L-3.20 7.77A8.40 8.40 0 0 1 -3.23 7.75L-6.02 9.56A11.30 11.30 0 0 1 -9.56 6.02L-7.75 3.23A8.40 8.40 0 0 1 -7.77 3.20L-11.02 2.50A11.30 11.30 0 0 1 -11.02 -2.50L-7.77 -3.20A8.40 8.40 0 0 1 -7.75 -3.23L-9.56 -6.02A11.30 11.30 0 0 1 -6.02 -9.56L-3.23 -7.75A8.40 8.40 0 0 1 -3.20 -7.77Z" fill="none" stroke="#10649f" stroke-width="1.7" stroke-linejoin="round"/><circle r="3.7" fill="none" stroke="#10649f" stroke-width="1.7"/></svg>
<svg class="ico" style="left:1933px;top:930px" width="28" height="28" viewBox="-14 -14 28 28" ><path d="M0 -9.6V4.2M-5.8 -1.6L0 4.4L5.8 -1.6" fill="none" stroke="#10649f" stroke-width="1.8" stroke-linecap="round" stroke-linejoin="round"/><path d="M-10.4 5.2V6.1A4.3 4.3 0 0 0 -6.1 10.4H6.1A4.3 4.3 0 0 0 10.4 6.1V5.2" fill="none" stroke="#10649f" stroke-width="1.8" stroke-linecap="round"/></svg>
<div class="t " style="left:207.6px;top:1044px;font-size:19.5px;letter-spacing:-0.500px;transform:scaleX(0.9882);transform-origin:0 0;">EBC Brakes</div>
<div class="t lnk" style="right:1157.81px;top:1044px;font-size:19.5px;letter-spacing:0.191px;">10002</div>
<div class="t " style="left:873.6px;top:1044px;font-size:19.5px;letter-spacing:-0.500px;transform:scaleX(0.9846);transform-origin:0 0;">BHWL</div>
<div class="t " style="left:991px;top:1044px;font-size:19.5px;letter-spacing:-0.500px;transform:scaleX(0.8472);transform-origin:0 0;">–</div>
<div class="t " style="left:1046px;top:1044px;font-size:19.5px;">/</div>
<div class="t " style="left:1089px;top:1044px;font-size:19.5px;letter-spacing:-0.500px;transform:scaleX(0.8947);transform-origin:0 0;">DEF</div>
<div class="t " style="left:1187.5px;top:1044px;font-size:19.5px;letter-spacing:0.500px;"><b>Stock:</b> hourly</div>
<svg class="ico" style="left:1502.5px;top:1005.5px" width="26" height="26" viewBox="-13 -13 26 26" ><circle r="10.4" fill="none" stroke="#c5112e" stroke-width="1.6"/><path d="M-4.3 -4.3L4.3 4.3M4.3 -4.3L-4.3 4.3" stroke="#c5112e" stroke-width="1.7" stroke-linecap="round"/></svg>
<div class="t sb red" style="left:1537px;top:1009px;font-size:19.5px;letter-spacing:0.500px;transform:scaleX(1.0159);transform-origin:0 0;">Stock failed</div>
<svg class="ico" style="left:1501px;top:1048px" width="28" height="24" viewBox="-14 -12 28 24" ><path d="M-10.4 2.2L-3.6 8.6L12 -6.6" fill="none" stroke="#222" stroke-width="1.9" stroke-linecap="round" stroke-linejoin="round"/></svg>
<div class="t sb" style="left:1537px;top:1051px;font-size:19.5px;letter-spacing:0.500px;transform:scaleX(1.0257);transform-origin:0 0;">Catalog completed</div>
<svg class="ico" style="left:1720px;top:1048px" width="28" height="24" viewBox="-14 -12 28 24" ><path d="M0 -8.6L10.5 8.4H-10.5Z" fill="none" stroke="#eaa500" stroke-width="2.3" stroke-linejoin="round"/><path d="M0 -2.4V3.4" stroke="#eaa500" stroke-width="1.9" stroke-linecap="round"/><circle cy="5.9" r="1.05" fill="#eaa500"/></svg>
<div class="t lnk" style="left:1755.5px;top:1051px;font-size:19.5px;">2</div>
<div class="t " style="left:1541px;top:1079px;font-size:19.5px;letter-spacing:-0.048px;">Jan 02, 2023, 12:00 AM</div>
<svg class="ico" style="left:1877.2px;top:1039px" width="28" height="28" viewBox="-14 -14 28 28" ><path d="M-3.20 -7.77L-2.50 -11.02A11.30 11.30 0 0 1 2.50 -11.02L3.20 -7.77A8.40 8.40 0 0 1 3.23 -7.75L6.02 -9.56A11.30 11.30 0 0 1 9.56 -6.02L7.75 -3.23A8.40 8.40 0 0 1 7.77 -3.20L11.02 -2.50A11.30 11.30 0 0 1 11.02 2.50L7.77 3.20A8.40 8.40 0 0 1 7.75 3.23L9.56 6.02A11.30 11.30 0 0 1 6.02 9.56L3.23 7.75A8.40 8.40 0 0 1 3.20 7.77L2.50 11.02A11.30 11.30 0 0 1 -2.50 11.02L-3.20 7.77A8.40 8.40 0 0 1 -3.23 7.75L-6.02 9.56A11.30 11.30 0 0 1 -9.56 6.02L-7.75 3.23A8.40 8.40 0 0 1 -7.77 3.20L-11.02 2.50A11.30 11.30 0 0 1 -11.02 -2.50L-7.77 -3.20A8.40 8.40 0 0 1 -7.75 -3.23L-9.56 -6.02A11.30 11.30 0 0 1 -6.02 -9.56L-3.23 -7.75A8.40 8.40 0 0 1 -3.20 -7.77Z" fill="none" stroke="#10649f" stroke-width="1.7" stroke-linejoin="round"/><circle r="3.7" fill="none" stroke="#10649f" stroke-width="1.7"/></svg>
<svg class="ico" style="left:1933px;top:1039px" width="28" height="28" viewBox="-14 -14 28 28" ><path d="M0 -9.6V4.2M-5.8 -1.6L0 4.4L5.8 -1.6" fill="none" stroke="#10649f" stroke-width="1.8" stroke-linecap="round" stroke-linejoin="round"/><path d="M-10.4 5.2V6.1A4.3 4.3 0 0 0 -6.1 10.4H6.1A4.3 4.3 0 0 0 10.4 6.1V5.2" fill="none" stroke="#10649f" stroke-width="1.8" stroke-linecap="round"/></svg>
<div class="t " style="left:207.6px;top:1154px;font-size:19.5px;letter-spacing:-0.500px;transform:scaleX(0.9882);transform-origin:0 0;">EBC Brakes</div>
<div class="t lnk" style="right:1157.81px;top:1154px;font-size:19.5px;letter-spacing:0.191px;">10002</div>
<div class="t " style="left:873.6px;top:1154px;font-size:19.5px;letter-spacing:-0.500px;transform:scaleX(0.9846);transform-origin:0 0;">BHWL</div>
<div class="t " style="left:991px;top:1154px;font-size:19.5px;letter-spacing:-0.500px;transform:scaleX(0.8472);transform-origin:0 0;">–</div>
<div class="t " style="left:1046px;top:1154px;font-size:19.5px;">/</div>
<div class="t " style="left:1089px;top:1154px;font-size:19.5px;letter-spacing:-0.500px;transform:scaleX(0.8947);transform-origin:0 0;">DEF</div>
<div class="t " style="left:1187.5px;top:1126px;font-size:19.5px;letter-spacing:0.500px;"><b>Stock:</b> hourly</div>
<div class="t " style="left:1187.5px;top:1154px;font-size:19.5px;letter-spacing:0.268px;"><b>Price:</b> daily, 12:00 AM</div>
<div class="t " style="left:1187.5px;top:1182px;font-size:19.5px;letter-spacing:0.015px;"><b>Catalog:</b> Jan 02, 2023, 12:00 AM</div>
<svg class="ico" style="left:1501px;top:1116px" width="28" height="24" viewBox="-14 -12 28 24" ><path d="M-10.4 2.2L-3.6 8.6L12 -6.6" fill="none" stroke="#222" stroke-width="1.9" stroke-linecap="round" stroke-linejoin="round"/></svg>
<div class="t sb" style="left:1537px;top:1119px;font-size:19.5px;letter-spacing:0.500px;transform:scaleX(1.0257);transform-origin:0 0;">Stock and price updated</div>
<svg class="ico" style="left:1502.5px;top:1157.5px" width="26" height="26" viewBox="-13 -13 26 26" ><circle r="10.4" fill="none" stroke="#c5112e" stroke-width="1.6"/><path d="M-4.3 -4.3L4.3 4.3M4.3 -4.3L-4.3 4.3" stroke="#c5112e" stroke-width="1.7" stroke-linecap="round"/></svg>
<div class="t sb red" style="left:1537px;top:1147px;font-size:19.5px;letter-spacing:0.500px;transform:scaleX(1.0179);transform-origin:0 0;">Catalog failed</div>
<div class="t red" style="left:1537px;top:1174px;font-size:19.5px;letter-spacing:-0.134px;">Jan 02, 2023, 12:00</div>
<div class="t red" style="left:1537px;top:1202px;font-size:19.5px;letter-spacing:-0.500px;transform:scaleX(0.9913);transform-origin:0 0;">AM</div>
<svg class="ico" style="left:1877.2px;top:1149px" width="28" height="28" viewBox="-14 -14 28 28" ><path d="M-3.20 -7.77L-2.50 -11.02A11.30 11.30 0 0 1 2.50 -11.02L3.20 -7.77A8.40 8.40 0 0 1 3.23 -7.75L6.02 -9.56A11.30 11.30 0 0 1 9.56 -6.02L7.75 -3.23A8.40 8.40 0 0 1 7.77 -3.20L11.02 -2.50A11.30 11.30 0 0 1 11.02 2.50L7.77 3.20A8.40 8.40 0 0 1 7.75 3.23L9.56 6.02A11.30 11.30 0 0 1 6.02 9.56L3.23 7.75A8.40 8.40 0 0 1 3.20 7.77L2.50 11.02A11.30 11.30 0 0 1 -2.50 11.02L-3.20 7.77A8.40 8.40 0 0 1 -3.23 7.75L-6.02 9.56A11.30 11.30 0 0 1 -9.56 6.02L-7.75 3.23A8.40 8.40 0 0 1 -7.77 3.20L-11.02 2.50A11.30 11.30 0 0 1 -11.02 -2.50L-7.77 -3.20A8.40 8.40 0 0 1 -7.75 -3.23L-9.56 -6.02A11.30 11.30 0 0 1 -6.02 -9.56L-3.23 -7.75A8.40 8.40 0 0 1 -3.20 -7.77Z" fill="none" stroke="#10649f" stroke-width="1.7" stroke-linejoin="round"/><circle r="3.7" fill="none" stroke="#10649f" stroke-width="1.7"/></svg>
<svg class="ico" style="left:1933px;top:1149px" width="28" height="28" viewBox="-14 -14 28 28" ><path d="M0 -9.6V4.2M-5.8 -1.6L0 4.4L5.8 -1.6" fill="none" stroke="#10649f" stroke-width="1.8" stroke-linecap="round" stroke-linejoin="round"/><path d="M-10.4 5.2V6.1A4.3 4.3 0 0 0 -6.1 10.4H6.1A4.3 4.3 0 0 0 10.4 6.1V5.2" fill="none" stroke="#10649f" stroke-width="1.8" stroke-linecap="round"/></svg>
<div class="t " style="left:207.6px;top:1264px;font-size:19.5px;letter-spacing:-0.500px;transform:scaleX(0.9882);transform-origin:0 0;">EBC Brakes</div>
<div class="t lnk" style="right:1157.81px;top:1264px;font-size:19.5px;letter-spacing:0.191px;">10002</div>
<div class="t " style="left:873.6px;top:1264px;font-size:19.5px;letter-spacing:-0.500px;transform:scaleX(0.9846);transform-origin:0 0;">BHWL</div>
<div class="t " style="left:991px;top:1264px;font-size:19.5px;letter-spacing:-0.500px;transform:scaleX(0.8472);transform-origin:0 0;">–</div>
<div class="t " style="left:1046px;top:1264px;font-size:19.5px;">/</div>
<div class="t " style="left:1089px;top:1264px;font-size:19.5px;letter-spacing:-0.500px;transform:scaleX(0.8947);transform-origin:0 0;">DEF</div>
<div class="t fade" style="left:1187.5px;top:1236px;font-size:19.5px;letter-spacing:0.500px;"><b>Stock:</b> hourly</div>
<div class="t fade" style="left:1187.5px;top:1264px;font-size:19.5px;letter-spacing:0.268px;"><b>Price:</b> daily, 12:00 AM</div>
<div class="t fade" style="left:1187.5px;top:1292px;font-size:19.5px;letter-spacing:0.015px;"><b>Catalog:</b> Jan 02, 2023, 12:00 AM</div>
<svg class="ico" style="left:1502.5px;top:1225.5px" width="26" height="26" viewBox="-13 -13 26 26" ><circle r="10.4" fill="none" stroke="#c5112e" stroke-width="1.6"/><path d="M-4.3 -4.3L4.3 4.3M4.3 -4.3L-4.3 4.3" stroke="#c5112e" stroke-width="1.7" stroke-linecap="round"/></svg>
<div class="t sb red" style="left:1537px;top:1229px;font-size:19.5px;letter-spacing:0.500px;transform:scaleX(1.0159);transform-origin:0 0;">Stock failed</div>
<svg class="ico" style="left:1687.5px;top:1225.5px" width="26" height="26" viewBox="-13 -13 26 26" ><circle r="10.4" fill="none" stroke="#c5112e" stroke-width="1.6"/><path d="M-4.3 -4.3L4.3 4.3M4.3 -4.3L-4.3 4.3" stroke="#c5112e" stroke-width="1.7" stroke-linecap="round"/></svg>
<div class="t sb red" style="left:1722px;top:1229px;font-size:19.5px;letter-spacing:0.500px;transform:scaleX(1.0199);transform-origin:0 0;">Price failed</div>
<svg class="ico" style="left:1501px;top:1268px" width="28" height="24" viewBox="-14 -12 28 24" ><path d="M-10.4 2.2L-3.6 8.6L12 -6.6" fill="none" stroke="#222" stroke-width="1.9" stroke-linecap="round" stroke-linejoin="round"/></svg>
<div class="t sb" style="left:1537px;top:1271px;font-size:19.5px;letter-spacing:0.500px;transform:scaleX(1.0257);transform-origin:0 0;">Catalog completed</div>
<div class="t " style="left:1541px;top:1299px;font-size:19.5px;letter-spacing:-0.048px;">Jan 02, 2023, 12:00 AM</div>
<svg class="ico" style="left:1877.2px;top:1259px" width="28" height="28" viewBox="-14 -14 28 28" ><path d="M-3.20 -7.77L-2.50 -11.02A11.30 11.30 0 0 1 2.50 -11.02L3.20 -7.77A8.40 8.40 0 0 1 3.23 -7.75L6.02 -9.56A11.30 11.30 0 0 1 9.56 -6.02L7.75 -3.23A8.40 8.40 0 0 1 7.77 -3.20L11.02 -2.50A11.30 11.30 0 0 1 11.02 2.50L7.77 3.20A8.40 8.40 0 0 1 7.75 3.23L9.56 6.02A11.30 11.30 0 0 1 6.02 9.56L3.23 7.75A8.40 8.40 0 0 1 3.20 7.77L2.50 11.02A11.30 11.30 0 0 1 -2.50 11.02L-3.20 7.77A8.40 8.40 0 0 1 -3.23 7.75L-6.02 9.56A11.30 11.30 0 0 1 -9.56 6.02L-7.75 3.23A8.40 8.40 0 0 1 -7.77 3.20L-11.02 2.50A11.30 11.30 0 0 1 -11.02 -2.50L-7.77 -3.20A8.40 8.40 0 0 1 -7.75 -3.23L-9.56 -6.02A11.30 11.30 0 0 1 -6.02 -9.56L-3.23 -7.75A8.40 8.40 0 0 1 -3.20 -7.77Z" fill="none" stroke="#10649f" stroke-width="1.7" stroke-linejoin="round"/><circle r="3.7" fill="none" stroke="#10649f" stroke-width="1.7"/></svg>
<svg class="ico" style="left:1933px;top:1259px" width="28" height="28" viewBox="-14 -14 28 28" ><circle r="11.6" fill="none" stroke="#10649f" stroke-width="1.9"/><path d="M0 -1.4V6.6" stroke="#10649f" stroke-width="2.2" stroke-linecap="round"/><circle cy="-5" r="1.3" fill="#10649f"/></svg>
<div class="t " style="left:207.6px;top:1367px;font-size:19.5px;letter-spacing:-0.500px;transform:scaleX(0.9882);transform-origin:0 0;">EBC Brakes</div>
<div class="t lnk" style="right:1157.81px;top:1367px;font-size:19.5px;letter-spacing:0.191px;">10002</div>
<div class="t " style="left:873.6px;top:1367px;font-size:19.5px;letter-spacing:-0.500px;transform:scaleX(0.9846);transform-origin:0 0;">BHWL</div>
<div class="t " style="left:991px;top:1367px;font-size:19.5px;letter-spacing:-0.500px;transform:scaleX(0.8472);transform-origin:0 0;">–</div>
<div class="t " style="left:1046px;top:1367px;font-size:19.5px;">/</div>
<div class="t " style="left:1089px;top:1367px;font-size:19.5px;letter-spacing:-0.500px;transform:scaleX(0.8947);transform-origin:0 0;">DEF</div>
<div class="t fade" style="left:1187.5px;top:1340px;font-size:19.5px;letter-spacing:0.500px;"><b>Stock:</b> hourly</div>
<div class="t fade" style="left:1187.5px;top:1367px;font-size:19.5px;letter-spacing:0.268px;"><b>Price:</b> daily, 12:00 AM</div>
<div class="t fade" style="left:1187.5px;top:1395px;font-size:19.5px;letter-spacing:0.015px;"><b>Catalog:</b> Jan 02, 2023, 12:00 AM</div>
<div class="t " style="left:1502px;top:1367px;font-size:19.5px;letter-spacing:-0.500px;transform:scaleX(0.8472);transform-origin:0 0;">–</div>
<div class="t " style="left:207.6px;top:1449px;font-size:19.5px;letter-spacing:-0.500px;transform:scaleX(0.9882);transform-origin:0 0;">EBC Brakes</div>
<div class="t " style="right:1158.5px;top:1449px;font-size:19.5px;letter-spacing:-0.500px;transform:scaleX(0.8472);transform-origin:100% 0;">–</div>
<div class="t " style="left:873.6px;top:1449px;font-size:19.5px;letter-spacing:-0.500px;transform:scaleX(0.9846);transform-origin:0 0;">BHWL</div>
<div class="t " style="left:991px;top:1449px;font-size:19.5px;letter-spacing:-0.500px;transform:scaleX(0.8472);transform-origin:0 0;">–</div>
<div class="t " style="left:1046px;top:1449px;font-size:19.5px;">/</div>
<div class="t " style="left:1089px;top:1449px;font-size:19.5px;letter-spacing:-0.500px;transform:scaleX(0.8947);transform-origin:0 0;">DEF</div>
<div class="t " style="left:1187px;top:1449px;font-size:19.5px;letter-spacing:-0.500px;transform:scaleX(0.8472);transform-origin:0 0;">–</div>
<div class="t " style="left:1502px;top:1449px;font-size:19.5px;letter-spacing:-0.500px;transform:scaleX(0.8472);transform-origin:0 0;">–</div>
<svg class="ico" style="left:1877.2px;top:1444px" width="28" height="28" viewBox="-14 -14 28 28" ><path d="M-3.20 -7.77L-2.50 -11.02A11.30 11.30 0 0 1 2.50 -11.02L3.20 -7.77A8.40 8.40 0 0 1 3.23 -7.75L6.02 -9.56A11.30 11.30 0 0 1 9.56 -6.02L7.75 -3.23A8.40 8.40 0 0 1 7.77 -3.20L11.02 -2.50A11.30 11.30 0 0 1 11.02 2.50L7.77 3.20A8.40 8.40 0 0 1 7.75 3.23L9.56 6.02A11.30 11.30 0 0 1 6.02 9.56L3.23 7.75A8.40 8.40 0 0 1 3.20 7.77L2.50 11.02A11.30 11.30 0 0 1 -2.50 11.02L-3.20 7.77A8.40 8.40 0 0 1 -3.23 7.75L-6.02 9.56A11.30 11.30 0 0 1 -9.56 6.02L-7.75 3.23A8.40 8.40 0 0 1 -7.77 3.20L-11.02 2.50A11.30 11.30 0 0 1 -11.02 -2.50L-7.77 -3.20A8.40 8.40 0 0 1 -7.75 -3.23L-9.56 -6.02A11.30 11.30 0 0 1 -6.02 -9.56L-3.23 -7.75A8.40 8.40 0 0 1 -3.20 -7.77Z" fill="none" stroke="#10649f" stroke-width="1.7" stroke-linejoin="round"/><circle r="3.7" fill="none" stroke="#10649f" stroke-width="1.7"/></svg>
<svg class="ico" style="left:1933px;top:1444px" width="28" height="28" viewBox="-14 -14 28 28" ><circle r="11.6" fill="none" stroke="#2f80b9" stroke-width="1.9"/><path d="M0 -1.4V6.6" stroke="#2f80b9" stroke-width="2.2" stroke-linecap="round"/><circle cy="-5" r="1.3" fill="#2f80b9"/></svg>
<div class="tip" style="left:1552px;top:544px;width:201px;height:56px;--ax:153px"></div>
<div class="t " style="left:1566.2px;top:565px;font-size:16.4px;letter-spacing:0.467px;">Cancel import process</div>
<div class="tip" style="left:1517px;top:1343px;width:473px;height:83px;--ax:424px"></div>
<div class="t " style="left:1530.7px;top:1363px;font-size:16.4px;letter-spacing:0.500px;transform:scaleX(1.0293);transform-origin:0 0;">You are not allowed to import products from this brand.</div>
<div class="t " style="left:1530.7px;top:1392px;font-size:16.4px;letter-spacing:0.493px;">Please refer to <span class="lnk">AutoSync</span> for more details.</div>
<svg class="ico" style="left:1700.6px;top:629.5px;filter:drop-shadow(1px 1.5px 1px rgba(0,0,0,.35))" width="18" height="18" viewBox="0 0 18 18"><path d="M6.2 0.5C7.4 0.5 8 1.3 8 2.4V4.6C8.6 4 10.4 4 10.8 5.2C11.6 4.6 13.2 4.8 13.6 6C14.6 5.6 16.2 6.2 16.2 7.8V10.6C16.2 12.4 14.6 13.6 14.2 14.8V16.4H5.8V15C5 13.6 2.6 11.2 1 9.2C0 7.8 1.2 6.4 2.6 7.2L4.3 8.6V2.4C4.3 1.3 5 0.5 6.2 0.5Z" fill="#fff" stroke="#111" stroke-width="1.2" stroke-linejoin="round"/><path d="M8.4 9.4V12M10.4 9.4V12M12.4 9.4V12" stroke="#111" stroke-width="0.9"/></svg>
<svg class="ico" style="left:1940px;top:1459.6px;filter:drop-shadow(1px 1.5px 1px rgba(0,0,0,.35))" width="18" height="18" viewBox="0 0 18 18"><path d="M6.2 0.5C7.4 0.5 8 1.3 8 2.4V4.6C8.6 4 10.4 4 10.8 5.2C11.6 4.6 13.2 4.8 13.6 6C14.6 5.6 16.2 6.2 16.2 7.8V10.6C16.2 12.4 14.6 13.6 14.2 14.8V16.4H5.8V15C5 13.6 2.6 11.2 1 9.2C0 7.8 1.2 6.4 2.6 7.2L4.3 8.6V2.4C4.3 1.3 5 0.5 6.2 0.5Z" fill="#fff" stroke="#111" stroke-width="1.2" stroke-linejoin="round"/><path d="M8.4 9.4V12M10.4 9.4V12M12.4 9.4V12" stroke="#111" stroke-width="0.9"/></svg>
<div class="abs" style="left:97px;top:1533px;width:1907px;height:15px;background:linear-gradient(to bottom,rgba(0,0,0,0),rgba(0,0,0,.06))"></div>
<div class="abs" style="left:97px;top:1548px;width:1907px;height:84px;background:#fff"></div>
<svg class="abs" style="left:0;top:0" width="2004" height="1632" viewBox="0 0 2004 1632" fill="none"><rect x="127.6" y="1563.8" width="244.6" height="53.4" rx="5.7" fill="#fff" stroke="#9e9e9e" stroke-width="1.6"/><rect x="401.1" y="1563.8" width="222.6" height="53.4" rx="5.7" fill="#fff" stroke="#9e9e9e" stroke-width="1.6"/><rect x="653.1" y="1563.8" width="253.6" height="53.4" rx="5.7" fill="#fff" stroke="#9e9e9e" stroke-width="1.6"/></svg>
<div class="t sb lnk" style="left:155px;top:1581px;font-size:21.8px;letter-spacing:0.500px;transform:scaleX(1.0655);transform-origin:0 0;">Re-import Brands</div>
<div class="t sb lnk" style="left:429px;top:1581px;font-size:21.8px;letter-spacing:0.500px;transform:scaleX(1.0768);transform-origin:0 0;">Import Vehicles</div>
<div class="t sb lnk" style="left:681px;top:1581px;font-size:21.8px;letter-spacing:0.500px;transform:scaleX(1.0680);transform-origin:0 0;">Import Schedule</div>
<div class="abs" style="left:866px;top:1586px;width:0;height:0;border-left:6.5px solid transparent;border-right:6.5px solid transparent;border-bottom:8px solid #10649f"></div>
<div class="t lnk" style="left:935.4px;top:1581px;font-size:21.8px;letter-spacing:0.404px;">View vehicles</div>
</div></div></body></html>
